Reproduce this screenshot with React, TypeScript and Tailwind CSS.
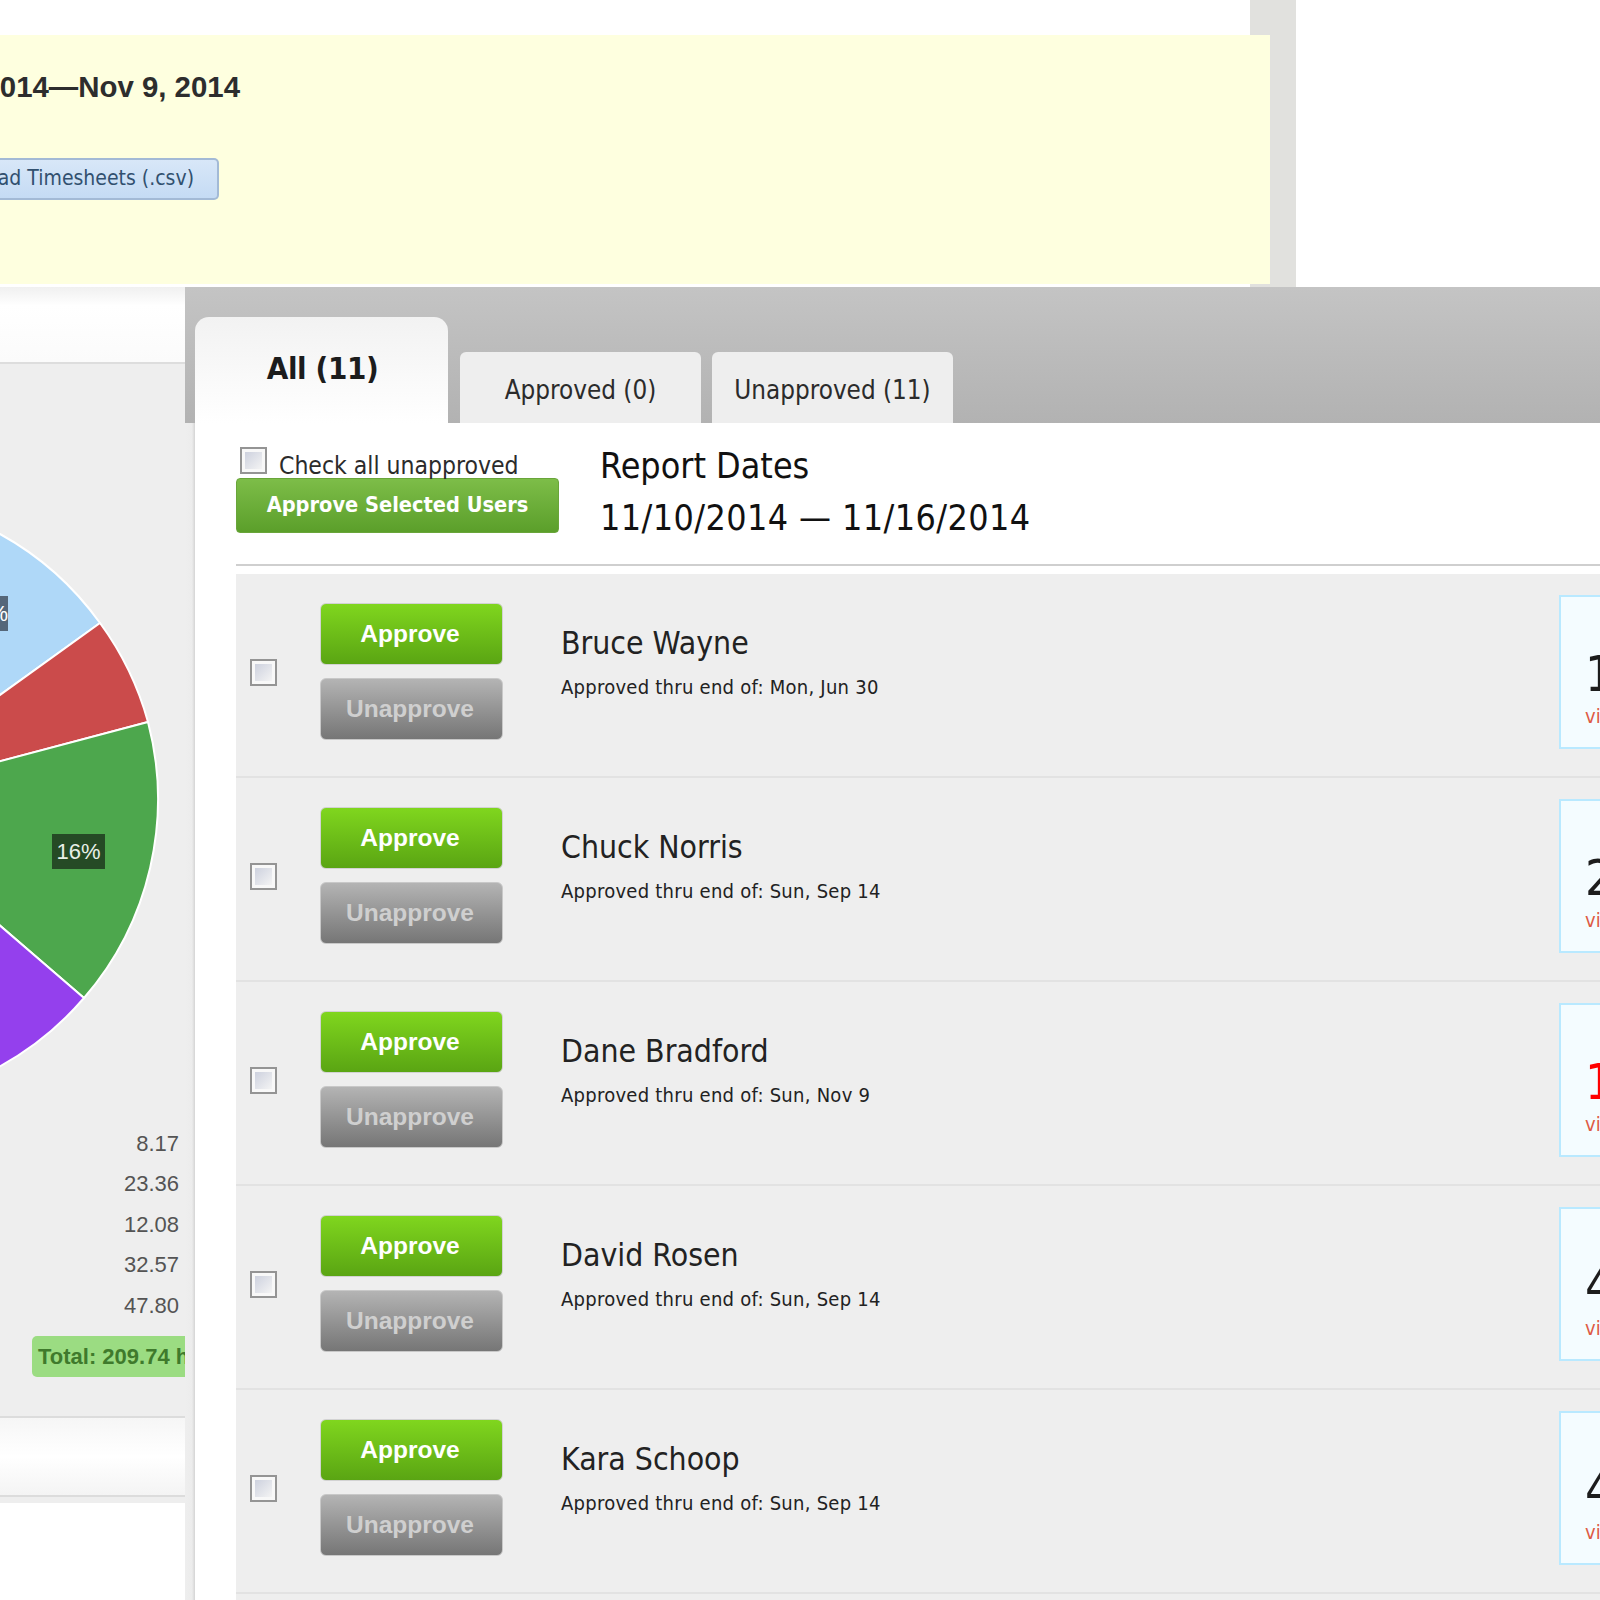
import React from "react";

const people = [
  { name: "Bruce Wayne", date: "Mon, Jun 30", num: "14", red: false },
  { name: "Chuck Norris", date: "Sun, Sep 14", num: "21", red: false },
  { name: "Dane Bradford", date: "Sun, Nov 9", num: "12", red: true },
  { name: "David Rosen", date: "Sun, Sep 14", num: "40", red: false },
  { name: "Kara Schoop", date: "Sun, Sep 14", num: "42", red: false },
  { name: "Lara Croft", date: "Sun, Sep 14", num: "40", red: false },
];

const values = ["8.17", "23.36", "12.08", "32.57", "47.80"];

function Check() {
  return (
    <div className="w-[27px] h-[27px] shrink-0 border-[2px] border-[#949494] p-[3px] bg-[#f8f8f8]">
      <div className="w-full h-full bg-gradient-to-br from-[#cdd1de] to-[#f4f4f4]" />
    </div>
  );
}

function Pie() {
  return (
    <div className="relative w-[185px] h-[560px]">
      <svg width="185" height="560" viewBox="0 510 185 560">
        <g stroke="#ffffff" strokeWidth="2" strokeLinejoin="round">
          <path d="M-146 800 L-146 496 A304 304 0 0 1 100 623 Z" fill="#afd8f8" />
          <path d="M-146 800 L100 623 A304 304 0 0 1 148 722 Z" fill="#cb4b4b" />
          <path d="M-146 800 L148 722 A304 304 0 0 1 84 998 Z" fill="#4da74d" />
          <path d="M-146 800 L84 998 A304 304 0 0 1 -146 1104 Z" fill="#9440ed" />
        </g>
      </svg>
      <div className="absolute left-0 top-[86px] w-[8px] h-[35px] bg-[#55677a] overflow-hidden flex justify-end items-center text-[22px] text-white font-['Liberation_Sans',sans-serif]">
        <span className="whitespace-nowrap">%</span>
      </div>
      <div className="absolute left-[52px] top-[324px] w-[53px] h-[35px] bg-[#254a25] flex items-center justify-center text-[22px] text-[#e8f0e8] font-['Liberation_Sans',sans-serif]">
        16%
      </div>
    </div>
  );
}

function LeftColumn() {
  return (
    <div className="w-[185px] shrink-0 flex flex-col font-['Liberation_Sans',sans-serif]">
      <div className="h-[75px] bg-gradient-to-b from-[#f0f0f0] via-white to-[#fbfbfb] via-[25%]" />
      <div className="h-[1054px] bg-[#eeeeee] border-t-2 border-[#dddddd] pt-[146px]">
        <Pie />
        <div className="mt-[54px] flex flex-col items-end pr-[6px] text-[22px] text-[#545454]">
          {values.map((v) => (
            <div key={v} className="h-[40.4px] leading-[40px]">{v}</div>
          ))}
        </div>
        <div className="mt-[10px] ml-[32px] h-[41px] rounded-l-[5px] bg-[#9bdc82] pl-[6px] overflow-hidden whitespace-nowrap leading-[41px] text-[22px] font-bold text-[#3f7a2c]">
          Total: 209.74 hours
        </div>
      </div>
      <div className="h-[81px] border-t-2 border-b-2 border-[#dcdcdc] bg-gradient-to-b from-[#f6f6f6] via-white to-[#f4f4f4]" />
      <div className="h-[6px] bg-[#eeeeee]" />
      <div className="flex-1 bg-white" />
    </div>
  );
}

function Row({ p }: { p: (typeof people)[number] }) {
  return (
    <div className="h-[204px] pb-[6px] border-b-2 border-[#e2e2e2] bg-[#eeeeee] flex items-center pl-[14px] box-border">
      <Check />
      <div className="ml-[43px] w-[183px] shrink-0 flex flex-col gap-[13px] pb-[2px] font-['Liberation_Sans',sans-serif] text-[24.5px] font-bold">
        <div className="h-[62px] rounded-[6px] border border-[#d2d2d2] bg-gradient-to-b from-[#80d61e] to-[#5aa513] text-white flex items-center justify-center pt-[2px] pr-[3px]">
          Approve
        </div>
        <div className="h-[62px] rounded-[6px] border border-[#c8c8c8] bg-gradient-to-b from-[#b4b4b4] to-[#767676] text-[#cfcfcf] flex items-center justify-center pt-[2px] pr-[3px]">
          Unapprove
        </div>
      </div>
      <div className="ml-[58px] self-start pt-[49px] w-[998px] shrink-0 text-[#222222]">
        <div className="h-[40px] leading-[40px] text-[31.7px]">{p.name}</div>
        <div className="mt-[11px] h-[26px] leading-[26px] text-[20px] tracking-[0.26px]">Approved thru end of: {p.date}</div>
      </div>
      <div className="w-[100px] h-[154px] shrink-0 border-2 border-[#b9e9ff] bg-[#f4fcff] pl-[24px] pt-[47px] box-border">
        <div className={"h-[60px] leading-[60px] text-[50px] " + (p.red ? "text-[#ff0000]" : "text-[#1c1c1c]")}>{p.num}</div>
        <div className="leading-[24px] text-[20px] text-[#de5a44]">view</div>
      </div>
    </div>
  );
}

export default function App() {
  return (
    <div className="w-[1600px] h-[1600px] overflow-hidden bg-white flex flex-col font-['DejaVu_Sans_Condensed','DejaVu_Sans',sans-serif]">
      <div className="h-[287px] shrink-0 flex">
        <div className="w-[1250px] shrink-0 pt-[35px]">
          <div className="relative z-10 w-[1270px] h-[249px] bg-[#feffdf] flex flex-col">
            <div className="w-[240px] mt-[35px] flex justify-end whitespace-nowrap font-['Liberation_Sans',sans-serif] font-bold text-[29.4px] leading-[34px] text-[#2d2d2d]">
              Oct 27, 2014—Nov 9, 2014
            </div>
            <div className="w-[219px] h-[42px] mt-[54px] rounded-r-[5px] border-2 border-l-0 border-[#a3bad6] bg-gradient-to-b from-[#d8e7f8] to-[#c5dbf4] flex justify-end items-center pr-[23px] whitespace-nowrap text-[21px] text-[#31506f]">
              Download Timesheets (.csv)
            </div>
          </div>
        </div>
        <div className="w-[46px] shrink-0 bg-[#e1e1de]" />
        <div className="flex-1 bg-white" />
      </div>

      <div className="flex-1 flex min-h-0">
        <LeftColumn />
        <div className="flex-1 min-w-0 flex flex-col">
          <div className="h-[136px] shrink-0 pl-[10px] flex items-end bg-gradient-to-b from-[#c4c4c4] to-[#b2b2b2]">
            <div className="w-[253px] h-[106px] rounded-t-[14px] bg-gradient-to-b from-[#f2f2f2] to-white flex justify-center pt-[31px] pl-[2px] font-bold text-[31px] tracking-[-0.4px] leading-[40px] text-[#1c1c1c]">
              All (11)
            </div>
            <div className="ml-[12px] w-[241px] h-[71px] rounded-t-[6px] bg-[#eeeeee] flex justify-center pt-[18px] text-[25.8px] leading-[40px] text-[#2b2b2b]">
              Approved (0)
            </div>
            <div className="ml-[11px] w-[241px] h-[71px] rounded-t-[6px] bg-[#eeeeee] flex justify-center pt-[18px] text-[25.8px] leading-[40px] text-[#2b2b2b]">
              Unapproved (11)
            </div>
          </div>
          <div className="flex-1 flex min-h-0">
            <div className="w-[10px] shrink-0 bg-gradient-to-r from-[#eeeeee] via-[#ececec] via-[70%] to-[#d4d4d4]" />
            <div className="flex-1 min-w-0 bg-white pl-[41px]">
              <div className="w-[1424px] h-[143px] border-b-2 border-[#cfcfcf] flex">
                <div className="w-[323px] shrink-0 pt-[24px]">
                  <div className="flex items-start h-[31px] pl-[4px]">
                    <Check />
                    <span className="ml-[12px] mt-[4px] text-[24.5px] leading-[30px] text-[#2b2b2b] whitespace-nowrap">Check all unapproved</span>
                  </div>
                  <div className="h-[55px] rounded-[4px] border border-[#69a53a] bg-gradient-to-b from-[#7dbd48] to-[#5b9f2a] flex items-center justify-center text-white font-bold text-[21.6px]">
                    Approve Selected Users
                  </div>
                </div>
                <div className="ml-[41px] pt-[20px] text-[#111111]">
                  <div className="h-[46px] leading-[46px] text-[35.6px]">Report Dates</div>
                  <div className="mt-[6px] h-[46px] leading-[46px] text-[35.6px] tracking-[0.4px] whitespace-nowrap">11/10/2014 — 11/16/2014</div>
                </div>
              </div>
              <div className="w-[1424px] mt-[8px]">
                {people.map((p, i) => (
                  <Row key={i} p={p} />
                ))}
              </div>
            </div>
          </div>
        </div>
      </div>
    </div>
  );
}
